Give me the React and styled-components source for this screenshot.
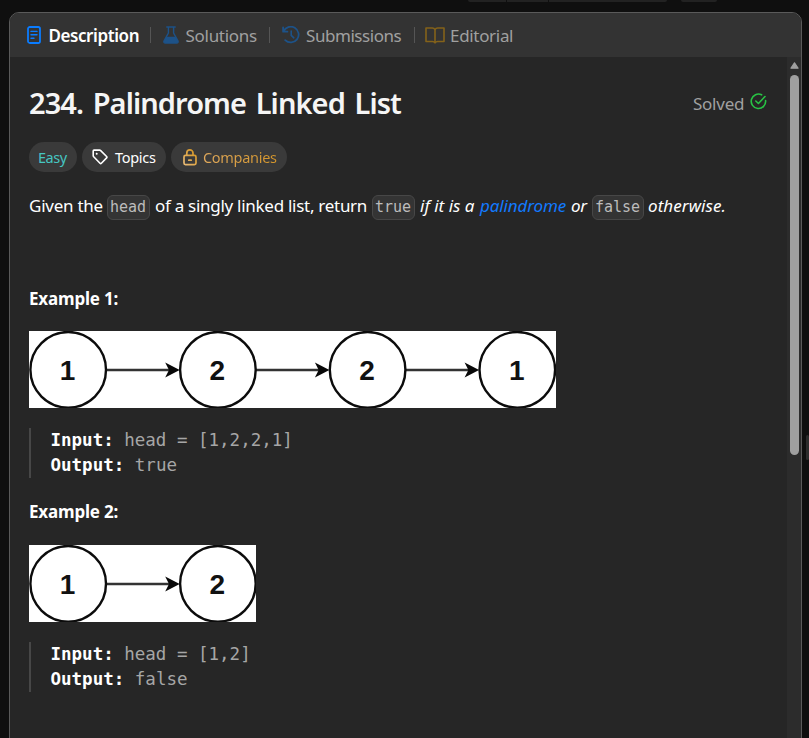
import React from "react";
import styled, { createGlobalStyle } from "styled-components";

const GlobalStyle = createGlobalStyle`
  * { box-sizing: border-box; }
  body {
    margin: 0;
    background: #0f0f0f;
    color: #fff;
    font: 400 17px/25px "Noto Sans", "Open Sans", sans-serif;
    overflow: hidden;
  }
  svg { display: block; flex: none; }
  h1, p, pre { margin: 0; }
`;

const Screen = styled.div`
  display: flex;
  flex-direction: column;
  width: 809px;
  height: 738px;
  overflow: hidden;
`;

const TopStrip = styled.div`
  display: flex;
  height: 12px;
  padding-left: 468px;
`;

const Stub = styled.div`
  width: ${(p) => p.$w}px;
  height: 2px;
  margin-right: ${(p) => p.$gap}px;
  background: #222;
  border-radius: ${(p) => p.$radius || "0"};
`;

const Workspace = styled.div`
  display: flex;
  flex: 1;
  min-height: 0;
  padding-left: 9px;
`;

const Panel = styled.main`
  display: flex;
  flex-direction: column;
  width: 793px;
  height: 740px;
  border: 1px solid #5a5a5a;
  border-radius: 10px;
  background: #262626;
  overflow: hidden;
`;

const Splitter = styled.div`
  width: 3px;
  height: 25px;
  margin: 423px 0 0 4px;
  border-radius: 2px;
  background: #2c2c2c;
`;

const TabBar = styled.nav`
  display: flex;
  flex: none;
  height: 44px;
  padding-left: 17px;
  background: #333;
`;

const Tab = styled.div`
  display: flex;
  align-items: center;
  width: ${(p) => p.$w}px;
  color: ${(p) => (p.$active ? "#fff" : "#a0a0a0")};
  font-weight: ${(p) => (p.$active ? 600 : 400)};
`;

const TabIcon = styled.span`
  width: ${(p) => p.$w}px;
  padding-left: ${(p) => p.$inset || 0}px;
  color: ${(p) => p.$color};
`;

const Divider = styled.i`
  width: 1px;
  height: 16px;
  margin-left: auto;
  background: #555;
`;

const Text = styled.span`
  white-space: nowrap;
  letter-spacing: ${(p) => p.$ls || 0}px;
`;

const GoldText = styled(Text)`
  background: linear-gradient(90deg, #e0a95c, #d2942a);
  background-clip: text;
  color: transparent;
`;

const Body = styled.div`
  display: flex;
  flex: 1;
  min-height: 0;
`;

const Content = styled.section`
  flex: 1;
  padding: 26px 19px 0 19px;
`;

const TitleRow = styled.header`
  display: flex;
  justify-content: space-between;
  height: 41px;
`;

const Title = styled.h1`
  font-size: 29px;
  font-weight: 600;
  line-height: 40px;
  letter-spacing: -0.92px;
  word-spacing: 3px;
  color: #f5f5f5;
  white-space: nowrap;
`;

const Solved = styled.div`
  display: flex;
  width: 75px;
  gap: 6px;
  line-height: 41px;
  color: #a0a0a0;
  svg { margin-top: 10px; }
`;

const Pills = styled.div`
  display: flex;
  gap: 5px;
  margin-top: 18px;
`;

const Pill = styled.div`
  display: flex;
  align-items: center;
  width: ${(p) => p.$w}px;
  height: 30px;
  padding-left: ${(p) => p.$pad}px;
  gap: ${(p) => p.$gap || 0}px;
  border-radius: 15px;
  background: #3a3a3a;
  color: ${(p) => p.$color};
  font-size: 14.5px;
`;

const Statement = styled.p`
  display: flex;
  align-items: center;
  height: 25px;
  margin-top: 23px;
  white-space: nowrap;
`;

const Phrase = styled.span`
  width: ${(p) => p.$w}px;
  letter-spacing: ${(p) => p.$ls}px;
  font-style: ${(p) => (p.$italic ? "italic" : "normal")};
  line-height: 21px;
  height: 25px;
  color: ${(p) => (p.$link ? "#127aff" : "inherit")};
`;

const Code = styled.code`
  width: ${(p) => p.$w}px;
  height: 25px;
  margin-right: ${(p) => p.$gap}px;
  padding-left: 2px;
  border: 1px solid #474747;
  border-radius: 6px;
  background: #343434;
  color: #bcbcbc;
  font: 15px/23px "DejaVu Sans Mono", monospace;
`;

const ExampleTitle = styled.p`
  height: 25px;
  margin-top: ${(p) => p.$top}px;
  font-weight: 700;
  line-height: 25px;
  letter-spacing: -0.18px;
`;

const Figure = styled.div`
  margin-top: ${(p) => p.$top}px;
`;

const Block = styled.pre`
  height: 50px;
  margin-top: 20px;
  padding-left: 19.5px;
  border-left: 2px solid #474747;
  color: #a6a6a6;
  font: 17.5px/25px "DejaVu Sans Mono", monospace;
  b { color: #fff; }
`;

const Track = styled.aside`
  display: flex;
  flex-direction: column;
  align-items: center;
  width: 14px;
  padding-top: 5px;
  background: #2c2c2c;
`;

const Thumb = styled.div`
  width: 9px;
  height: 380px;
  margin-top: 6px;
  border-radius: 5px;
  background: #9f9f9f;
`;

const DocIcon = () => (
  <svg width="14" height="18" viewBox="0 0 14 18" fill="none" stroke="currentColor">
    <rect x="1" y="1" width="12" height="16" rx="1.8" strokeWidth="1.8" />
    <path d="M4 5.4h6M4 8.8h6M4 12.2h3" strokeWidth="1.4" strokeLinecap="round" />
  </svg>
);

const FlaskIcon = () => (
  <svg width="16" height="18" viewBox="0 0 16 18">
    <path d="M3.8 1h8.4M5.4 1v6L1.1 14.7Q.3 17 2.5 17h11q2.2 0 1.4-2.3L10.6 7V1" fill="none" stroke="currentColor" strokeWidth="1.4" strokeLinecap="round" />
    <path d="M3.5 10.8h9l2.6 4.4q.4 1.8-1.6 1.8h-11q-2 0-1.6-1.8z" fill="currentColor" />
  </svg>
);

const HistoryIcon = () => (
  <svg width="18" height="18" viewBox="0 0 18 18" fill="none" stroke="currentColor" strokeWidth="1.8" strokeLinecap="round" strokeLinejoin="round">
    <path d="M1.1 1.5v4.2h4.3M1.5 5.4A7.9 7.9 0 1 1 3.2 14.2" />
    <path d="M9.2 5v4.3l2.6 2.5" strokeWidth="1.6" />
  </svg>
);

const BookIcon = () => (
  <svg width="20" height="17" viewBox="0 0 20 17" fill="none" stroke="currentColor" strokeWidth="1.6" strokeLinejoin="round">
    <path d="M10 2.8Q9.2 1 7.3 1H1v13.5h6.6q1.5 0 2.4 1.3.9-1.3 2.4-1.3H19V1h-6.3Q10.8 1 10 2.8zV15" />
  </svg>
);

const TagIcon = () => (
  <svg width="16" height="16" viewBox="0 0 16 16" fill="none" stroke="currentColor" strokeWidth="1.6" strokeLinejoin="round">
    <path d="M1.2 1.9Q1.2 1.1 2 1.1L7.6 1.1Q8.2 1.1 8.7 1.6L14.6 7.5Q15.3 8.2 14.6 8.9L9.4 14.2Q8.7 14.9 8 14.2L1.7 7.8Q1.2 7.3 1.2 6.8z" />
    <circle cx="4.7" cy="4.7" r="1" fill="currentColor" stroke="none" />
  </svg>
);

const LockIcon = () => (
  <svg width="14" height="17" viewBox="0 0 14 17" fill="none" stroke="url(#gold)" strokeWidth="1.7" strokeLinecap="round">
    <defs>
      <linearGradient id="gold" gradientUnits="userSpaceOnUse" x1="0" y1="16" x2="14" y2="4">
        <stop stopColor="#eabd7c" />
        <stop offset="1" stopColor="#d59522" />
      </linearGradient>
    </defs>
    <rect x="1" y="6.4" width="12" height="9.2" rx="1.5" />
    <path d="M3.8 6.2V4a3.1 3.1 0 0 1 6.2 0v2.2M5.8 11.2h2.4" />
  </svg>
);

const SolvedIcon = () => (
  <svg width="17" height="17" viewBox="0 0 17 17" fill="none" stroke="#28c244" strokeWidth="1.6" strokeLinecap="round" strokeLinejoin="round">
    <path d="M11.6 1.8A7.2 7.2 0 1 0 15.6 7.6" />
    <path d="M5.8 8l2.6 2.5 6.6-7" />
  </svg>
);

const STEP = 149.7;

function ListDiagram({ values, width }) {
  return (
    <svg width={width} height="77" viewBox={`0 0 ${width} 77`}>
      <rect width={width} height="77" fill="#fff" />
      {values.map((value, i) => {
        const x = 39.2 + i * STEP;
        return (
          <g key={i}>
            {i < values.length - 1 && (
              <>
                <path d={`M${x + 38} 39H${x + 102}`} stroke="#333" strokeWidth="2.5" />
                <path d={`M${x + 111.5} 39l-14.5-7.5 3.8 7.5-3.8 7.5z`} fill="#080808" />
              </>
            )}
            <circle cx={x} cy="38.8" r="37.8" fill="none" stroke="#0c0c0c" strokeWidth="2.4" />
            <text x={x - 0.6} y="49.2" textAnchor="middle" fontFamily="Liberation Sans, sans-serif" fontSize="28" fontWeight="700" fill="#111">
              {value}
            </text>
          </g>
        );
      })}
    </svg>
  );
}

function Example({ n, values, width, top, figureTop, output }) {
  return (
    <>
      <ExampleTitle $top={top}>Example {n}:</ExampleTitle>
      <Figure $top={figureTop}>
        <ListDiagram values={values} width={width} />
      </Figure>
      <Block>
        <b>Input:</b> head = [{values.join(",")}]{"\n"}
        <b>Output:</b> {output}
      </Block>
    </>
  );
}

export default function App() {
  return (
    <Screen>
      <GlobalStyle />
      <TopStrip>
        <Stub $w={38} $gap={1} $radius="0 0 0 5px" />
        <Stub $w={41} $gap={1} />
        <Stub $w={118} $gap={14} $radius="0 0 5px 0" />
        <Stub $w={36} $gap={0} $radius="0 0 5px 5px" />
      </TopStrip>
      <Workspace>
        <Panel>
          <TabBar>
            <Tab $w={124} $active>
              <TabIcon $w={21.5} $color="#0a7cff"><DocIcon /></TabIcon>
              <Text $ls={-0.42}>Description</Text>
              <Divider />
            </Tab>
            <Tab $w={119}>
              <TabIcon $w={34.5} $inset={12} $color="#1d5288"><FlaskIcon /></TabIcon>
              <Text $ls={-0.29}>Solutions</Text>
              <Divider />
            </Tab>
            <Tab $w={145}>
              <TabIcon $w={36} $inset={12} $color="#1d5288"><HistoryIcon /></TabIcon>
              <Text $ls={-0.45}>Submissions</Text>
              <Divider />
            </Tab>
            <Tab $w={110}>
              <TabIcon $w={35} $inset={10} $color="#84621a"><BookIcon /></TabIcon>
              <Text $ls={-0.32}>Editorial</Text>
            </Tab>
          </TabBar>
          <Body>
            <Content>
              <TitleRow>
                <Title>234. Palindrome Linked List</Title>
                <Solved><Text $ls={-0.25}>Solved</Text><SolvedIcon /></Solved>
              </TitleRow>
              <Pills>
                <Pill $w={48} $pad={9} $color="#46c6c2"><Text $ls={-0.5}>Easy</Text></Pill>
                <Pill $w={84} $pad={10} $gap={7} $color="#fff"><TagIcon /><Text $ls={-0.29}>Topics</Text></Pill>
                <Pill $w={116} $pad={11.5} $gap={6.5} $color="#dea03c"><LockIcon /><GoldText $ls={-0.3}>Companies</GoldText></Pill>
              </Pills>
              <Statement>
                <Phrase $w={78} $ls={-0.25}>Given the</Phrase>
                <Code $w={43} $gap={5}>head</Code>
                <Phrase $w={217} $ls={-0.28}>of a singly linked list, return</Phrase>
                <Code $w={43} $gap={5}>true</Code>
                <Phrase $w={60} $ls={0} $italic>if it is a</Phrase>
                <Phrase $w={91} $ls={-0.12} $italic $link>palindrome</Phrase>
                <Phrase $w={21} $ls={-0.3} $italic>or</Phrase>
                <Code $w={52} $gap={4}>false</Code>
                <Phrase $w={78} $ls={0.08} $italic>otherwise.</Phrase>
              </Statement>
              <Example n={1} values={[1, 2, 2, 1]} width={527} top={66} figureTop={20} output="true" />
              <Example n={2} values={[1, 2]} width={227} top={21} figureTop={21} output="false" />
            </Content>
            <Track>
              <svg width="9" height="7" viewBox="0 0 9 7"><path d="M4.5.8L8 6.2H1z" fill="#9f9f9f" stroke="#9f9f9f" strokeWidth="1.2" strokeLinejoin="round" /></svg>
              <Thumb />
            </Track>
          </Body>
        </Panel>
        <Splitter />
      </Workspace>
    </Screen>
  );
}
